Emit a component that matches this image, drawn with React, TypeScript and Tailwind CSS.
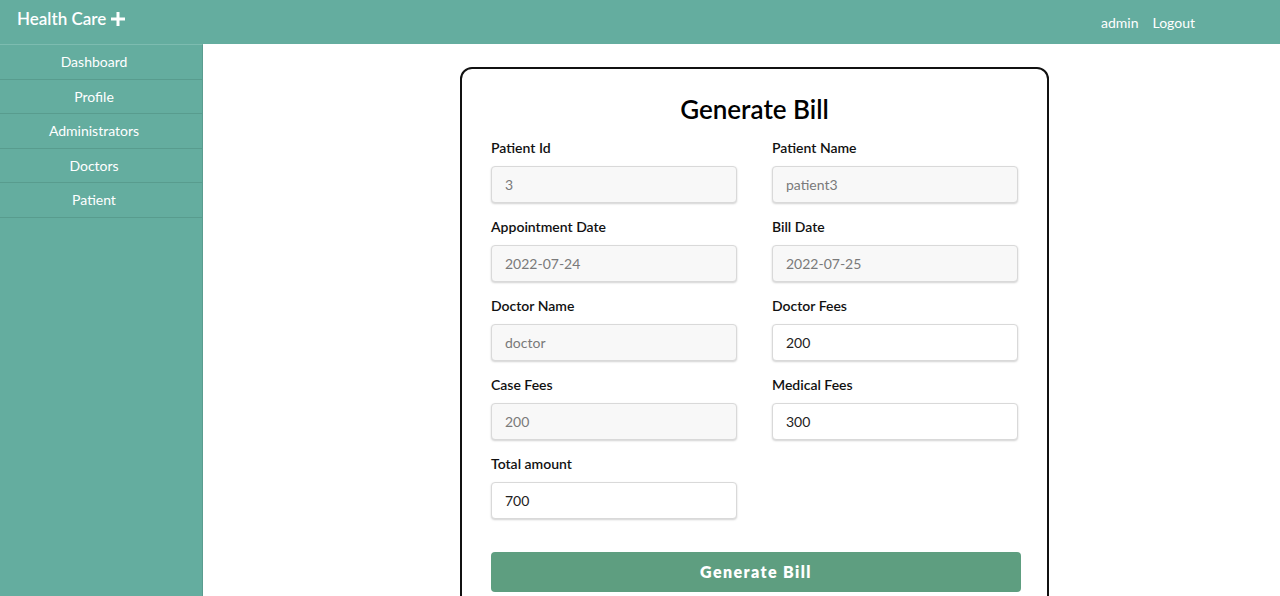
import React from 'react';

interface Field {
  label: string;
  value: string;
  disabled?: boolean;
}

const rows: Field[][] = [
  [
    { label: 'Patient Id', value: '3', disabled: true },
    { label: 'Patient Name', value: 'patient3', disabled: true },
  ],
  [
    { label: 'Appointment Date', value: '2022-07-24', disabled: true },
    { label: 'Bill Date', value: '2022-07-25', disabled: true },
  ],
  [
    { label: 'Doctor Name', value: 'doctor', disabled: true },
    { label: 'Doctor Fees', value: '200' },
  ],
  [
    { label: 'Case Fees', value: '200', disabled: true },
    { label: 'Medical Fees', value: '300' },
  ],
  [{ label: 'Total amount', value: '700' }],
];

const navItems = ['Dashboard', 'Profile', 'Administrators', 'Doctors', 'Patient'];

function FormField({ label, value, disabled }: Field) {
  return (
    <div className="flex flex-col">
      <label className="h-5 text-[14px] leading-5 font-semibold text-[#111]">{label}</label>
      <input
        readOnly
        value={value}
        className={`mt-2 h-[37px] w-full rounded-[4px] border border-[#d9d9d9] px-[13px] text-[14px] shadow-[0_1px_2px_rgba(0,0,0,0.18)] outline-none ${
          disabled ? 'bg-[#f8f8f8] text-[#7a7a7a]' : 'bg-white text-[#222]'
        }`}
      />
    </div>
  );
}

export default function App() {
  return (
    <div className="h-[596px] overflow-hidden bg-white font-['Lato','Noto_Sans',sans-serif]">
      {/* Top bar */}
      <header className="flex h-[44px] items-center justify-between bg-[#64ad9f] pl-[17px] pr-[85px] text-white">
        <div className="mb-[6px] flex items-center gap-[4px] text-[17px] font-semibold">
          <span>Health Care</span>
          <svg width="16" height="16" viewBox="0 0 16 16" className="mb-[1px]">
            <path d="M8 1v14M1 8h14" stroke="white" strokeWidth="3" />
          </svg>
        </div>
        <nav className="flex items-center gap-[14px] text-[14px]">
          <span>admin</span>
          <span>Logout</span>
        </nav>
      </header>

      <div className="flex">
        {/* Sidebar */}
        <aside className="min-h-[552px] w-[203px] shrink-0 border-t border-r border-t-[#7dbcb0] border-r-[#5a9c8f] bg-[#64ad9f]">
          {navItems.map(item => (
            <div
              key={item}
              className="flex h-[34.5px] items-center justify-center border-b border-[#589c8e] pr-[14px] text-[14px] text-white"
            >
              {item}
            </div>
          ))}
        </aside>

        {/* Main */}
        <main className="flex-1 pt-[23px]">
          <div className="ml-[257px] w-[589px] rounded-[12px] border-2 border-[#111] px-[29px] pt-[22px] pb-8">
            <h1 className="text-center text-[26px] leading-9 font-semibold text-black">Generate Bill</h1>
            <div className="mt-[11px] flex flex-col gap-[14px]">
              {rows.map((row, i) => (
                <div key={i} className="grid grid-cols-[246px_246px] gap-x-[35px]">
                  {row.map(f => (
                    <FormField key={f.label} {...f} />
                  ))}
                </div>
              ))}
            </div>
            <button className="mt-[33px] h-[40px] w-[530px] rounded-[4px] bg-[#5e9e80] text-[16px] font-extrabold tracking-[1.4px] text-white">
              Generate Bill
            </button>
          </div>
        </main>
      </div>
    </div>
  );
}
